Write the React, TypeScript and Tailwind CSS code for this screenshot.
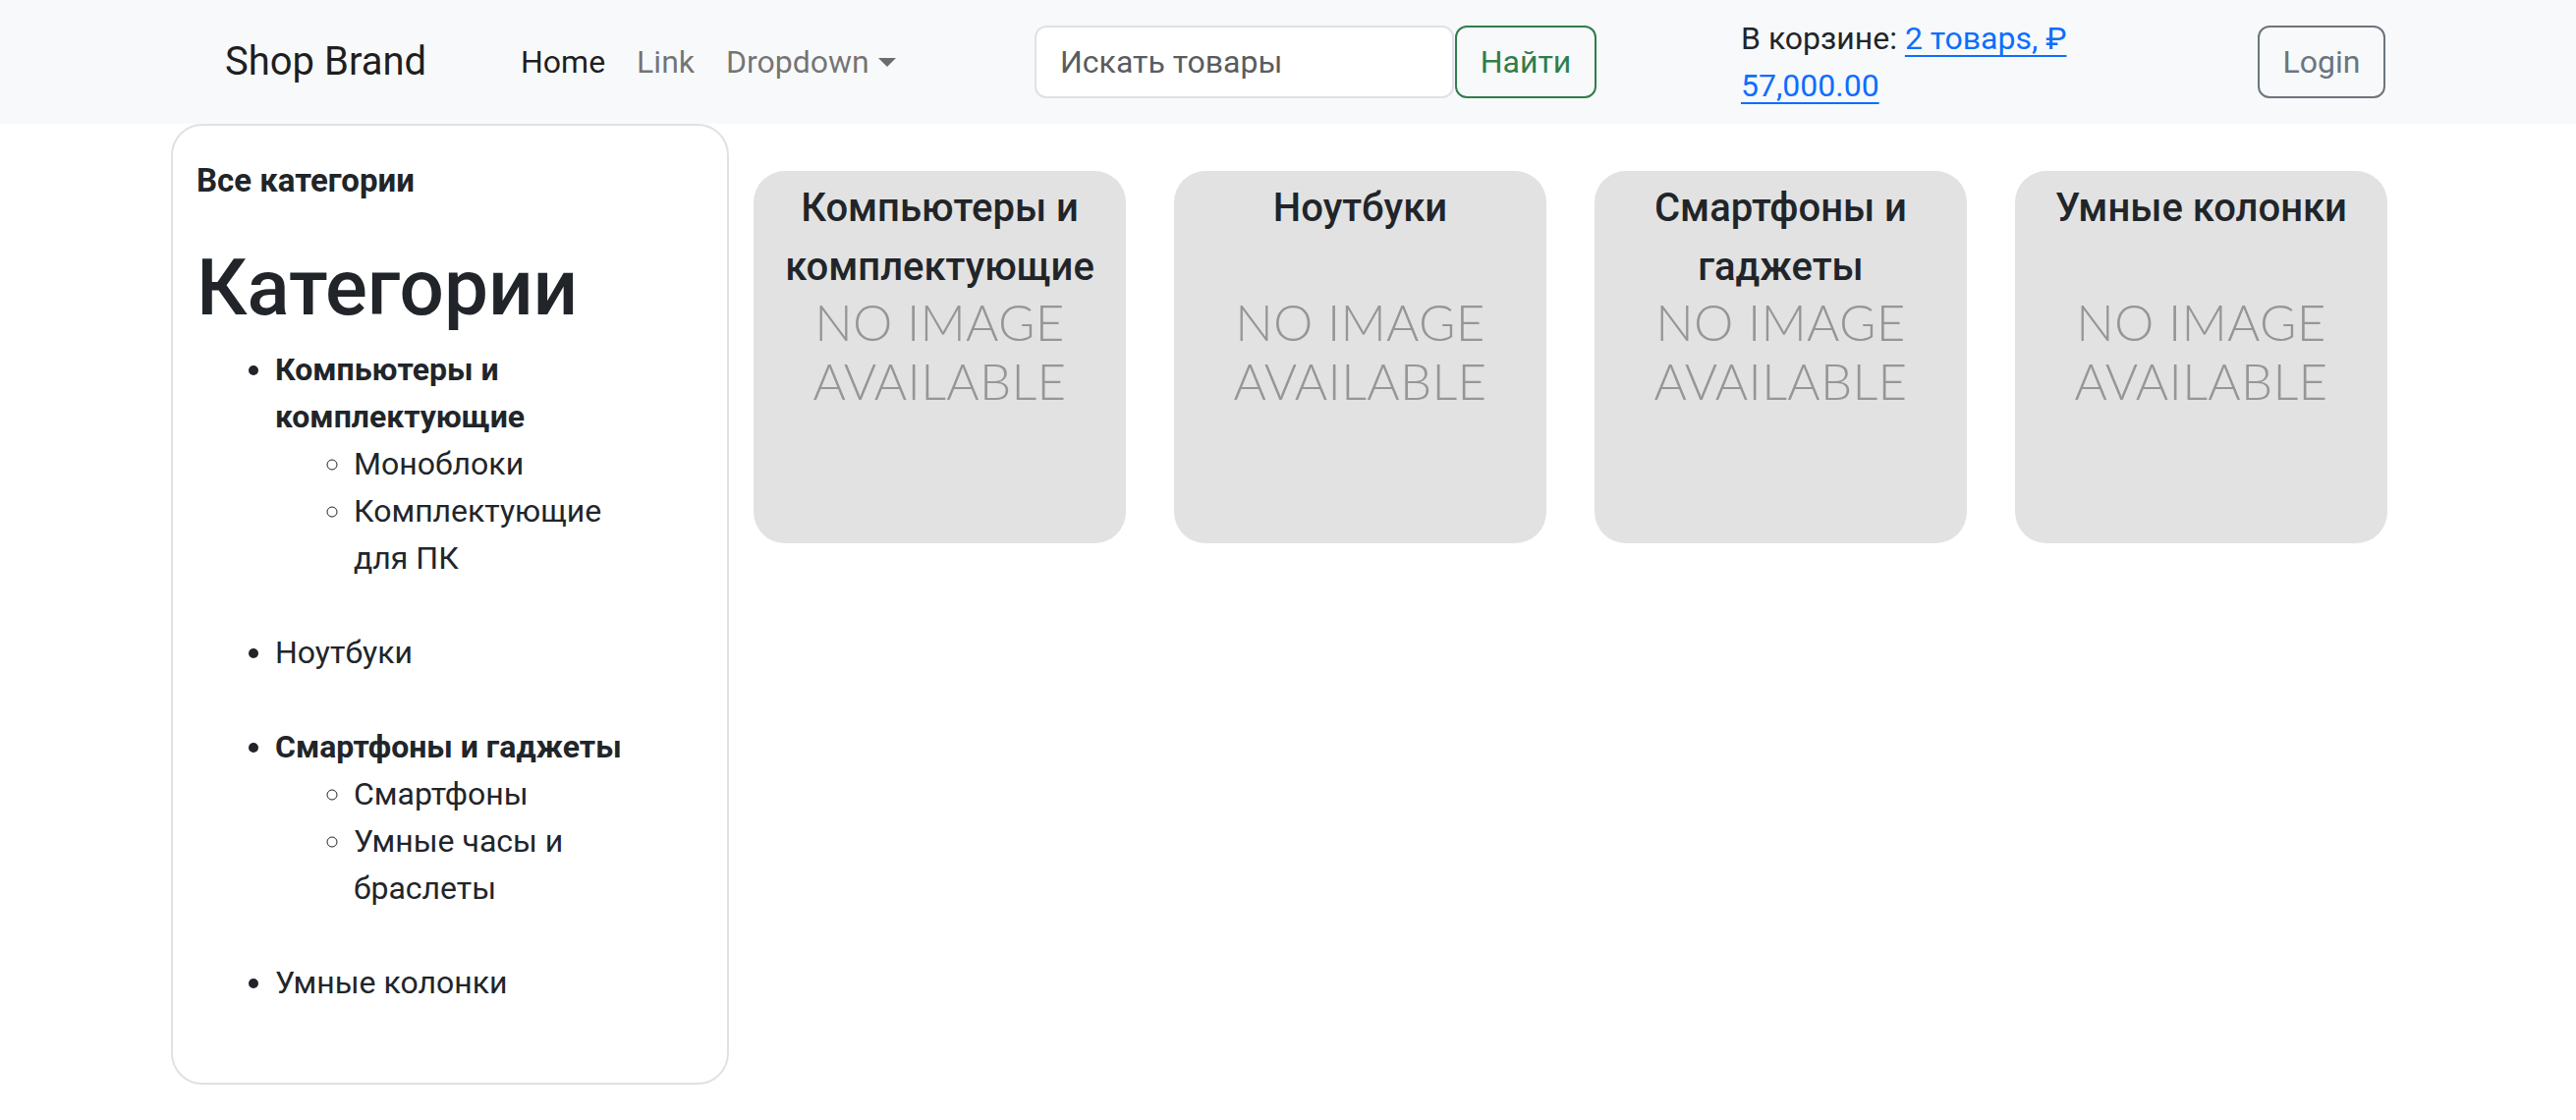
import React from "react";

const font = { fontFamily: "Roboto, 'Noto Sans', sans-serif" };

function ProductCard({ title }: { title: string }) {
  return (
    <div className="relative w-[379px] h-[379px] shrink-0 rounded-[32px] bg-[#e2e2e2] overflow-hidden">
      <div
        className="absolute left-0 right-0 top-[124px] text-center text-[51px] leading-[60px] font-light text-[#969696] tracking-[0.3px]"
        style={{ fontFamily: "Lato, 'Open Sans', sans-serif" }}
      >
        NO IMAGE
        <br />
        AVAILABLE
      </div>
      <div className="relative px-[16px] pt-[8px] text-center text-[40px] leading-[60px] font-medium text-[#212529]">
        {title}
      </div>
    </div>
  );
}

export default function App() {
  return (
    <div className="min-h-[1140px] bg-white text-[#212529]" style={font}>
      {/* Navbar */}
      <nav className="h-[126px] bg-[#f8f9fa] flex items-center pl-[229px] pr-[194px]">
        <div className="w-[301px] shrink-0 text-[40px] leading-[60px] text-black/90">Shop Brand</div>
        <ul className="w-[523px] shrink-0 flex items-center gap-[32px] text-[32px] leading-[48px]">
          <li className="text-black/90">Home</li>
          <li className="text-black/55">Link</li>
          <li className="text-black/55 flex items-center">
            Dropdown
            <span className="ml-[9px] inline-block w-0 h-0 border-l-[9px] border-r-[9px] border-t-[9px] border-l-transparent border-r-transparent border-t-[#6b6c6d]" />
          </li>
        </ul>
        <div className="flex items-center shrink-0">
          <input
            className="w-[427px] h-[74px] rounded-[12px] border-2 border-[#dee2e6] bg-white px-[24px] text-[32px] text-[#212529] placeholder:text-[#595c5f] outline-none"
            placeholder="Искать товары"
          />
          <button className="ml-[1px] w-[144px] h-[74px] rounded-[12px] border-2 border-[#2f7d4c] text-[#2f7d4c] text-[32px] bg-transparent">
            Найти
          </button>
        </div>
        <div className="ml-[147px] text-[32px] leading-[48px] text-[#212529]">
          В корзине:{" "}
          <a className="text-[#0d6efd] underline underline-offset-[6px] decoration-2">
            2 товарs, ₽
            <br />
            57,000.00
          </a>
        </div>
        <button className="ml-auto w-[130px] h-[74px] rounded-[12px] border-2 border-[#6c757d] text-[#6c757d] text-[32px] bg-transparent">
          Login
        </button>
      </nav>

      {/* Body */}
      <div className="flex items-start pl-[174px]">
        <aside className="w-[568px] shrink-0 rounded-[32px] border-2 border-[#dee2e6] pt-[32px] px-[24px] pb-[30px] text-[32px] leading-[48px]">
          <div className="font-bold text-[33px]">Все категории</div>
          <h1 className="mt-[37px] text-[80px] leading-[96px] font-medium">Категории</h1>
          <ul className="mt-[11px] list-disc pl-[80px]">
            <li className="mb-[48px]">
              <span className="font-bold">
                Компьютеры и
                <br />
                комплектующие
              </span>
              <ul className="list-[circle] pl-[80px]">
                <li>Моноблоки</li>
                <li>
                  Комплектующие
                  <br />
                  для ПК
                </li>
              </ul>
            </li>
            <li className="mb-[48px]">Ноутбуки</li>
            <li className="mb-[48px]">
              <span className="font-bold">Смартфоны и гаджеты</span>
              <ul className="list-[circle] pl-[80px]">
                <li>Смартфоны</li>
                <li>
                  Умные часы и
                  <br />
                  браслеты
                </li>
              </ul>
            </li>
            <li className="mb-[48px]">Умные колонки</li>
          </ul>
        </aside>

        <div className="ml-[25px] mt-[48px] flex gap-[49px]">
          <ProductCard title="Компьютеры и комплектующие" />
          <ProductCard title="Ноутбуки" />
          <ProductCard title="Смартфоны и гаджеты" />
          <ProductCard title="Умные колонки" />
        </div>
      </div>
    </div>
  );
}
